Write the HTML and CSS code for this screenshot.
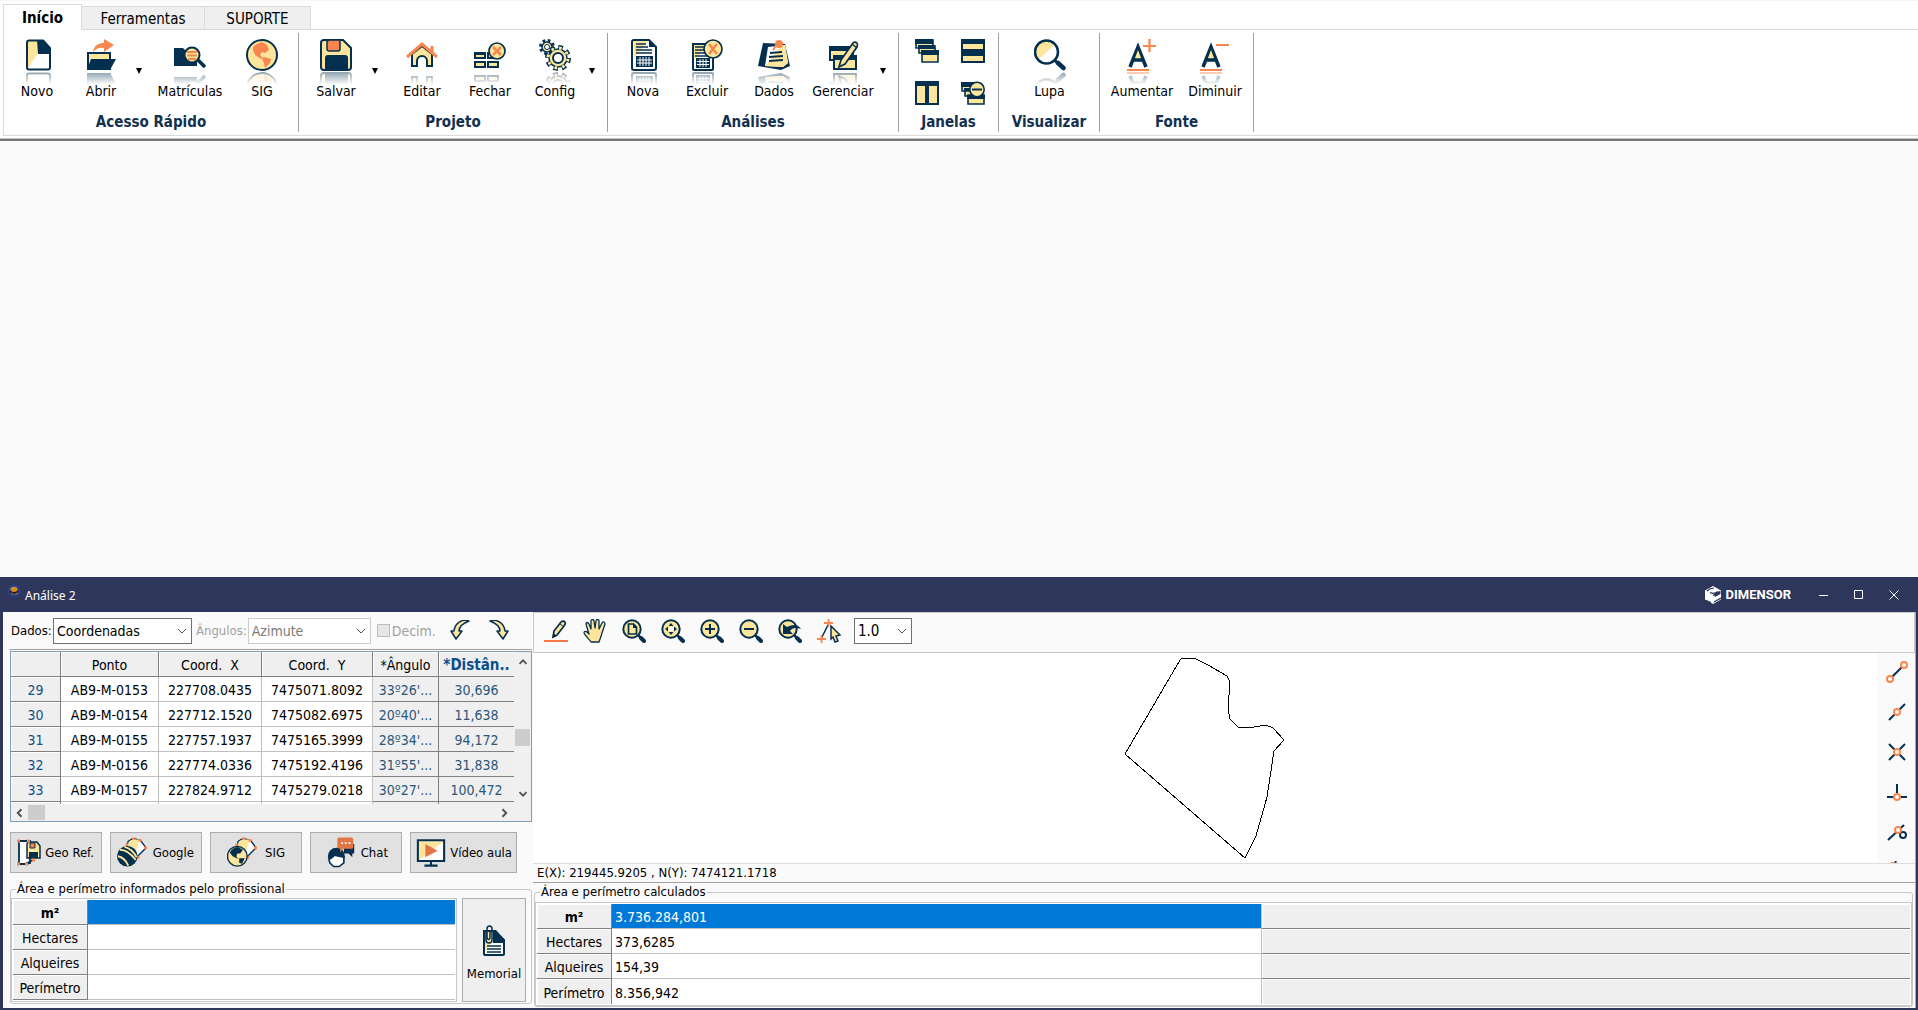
FILE: index.html
```html
<!DOCTYPE html>
<html lang="pt-BR">
<head>
<meta charset="utf-8">
<title>Análise 2</title>
<link rel="stylesheet" href="styles.css">
</head>
<body>
<svg class="defs" aria-hidden="true">
  <defs>
    <symbol id="i-novo" viewBox="0 0 32 32"><path d="M7 2h14l8 9v17a2 2 0 0 1-2 2H7a1 1 0 0 1-1-1V3a1 1 0 0 1 1-1z" fill="#fff"/><path d="M7 2h10v12L7 29z" fill="#fde59b"/><path d="M16 1h7l7 8v6H17z" fill="#04304f"/><path d="M8 1.500h14l7 8v19a2 2 0 0 1-2 2H8a2 2 0 0 1-2-2v-25a2 2 0 0 1 2-2z" fill="none" stroke="#04304f" stroke-width="2"/></symbol>
    <symbol id="i-abrir" viewBox="0 0 32 32"><path d="M3 18v-4h10l2 2h10v4z" fill="#fde59b" stroke="#04304f" stroke-width="2"/><path d="M3 14h22v16H3z" fill="#fde59b" stroke="#04304f" stroke-width="2"/><path d="M6 20h25l-6 11H2z" fill="#04304f"/><path d="M8 13C9 6 14 4 19 4V0l10 6-10 7V9c-5-1-8 1-11 4z" fill="#fa864f"/></symbol>
    <symbol id="i-matriculas" viewBox="0 0 32 32"><path d="M0 27V9h9l2 2h12v16z" fill="#04304f"/><circle cx="18" cy="16" r="7.500" fill="#fde59b" stroke="#04304f" stroke-width="2"/><path d="M13 13h10M13 16.500h10M14 20h8" stroke="#fa864f" stroke-width="2"/><path d="m24 21 7 7" stroke="#04304f" stroke-width="3.500"/></symbol>
    <symbol id="i-globo" viewBox="0 0 32 32"><circle cx="16" cy="16" r="15" fill="#fde59b" stroke="#04304f" stroke-width="2"/><path d="M7 8c3-3 6-4 9-5l5 3 2 5-4 3-3-1-2 3 3 3-2 1-6-4-2-5zM18 18l7 2-1 4-5 5-1-5-2-4z" fill="#fa864f"/></symbol>
    <symbol id="i-salvar" viewBox="0 0 32 32"><path d="M4 1h19l8 8v19a3 3 0 0 1-3 3H4a3 3 0 0 1-3-3V4a3 3 0 0 1 3-3z" fill="#fde59b" stroke="#04304f" stroke-width="2"/><path d="M9 1h11v9a2 2 0 0 1-2 2H9a2 2 0 0 1-2-2V2z" fill="#fa864f" stroke="#04304f" stroke-width="1.500"/><path d="M5 31V19a3 3 0 0 1 3-3h17a3 3 0 0 1 3 3v12z" fill="#04304f"/></symbol>
    <symbol id="i-editar" viewBox="0 0 32 32"><path d="M6 27V15l10-8 10 8v12h-5v-5a5 5 0 0 0-10 0v5z" fill="#fde59b" stroke="#04304f" stroke-width="2"/><path d="M1 18 16 5l15 13M26 7v6" fill="none" stroke="#fa864f" stroke-width="3"/></symbol>
    <symbol id="i-fechar" viewBox="0 0 32 32"><path d="M1 14h10v5H1zM14 14h10v5H14zM1 23h10v5H1zM14 23h10v5H14z" fill="#fde59b" stroke="#04304f" stroke-width="2"/><path d="M0 13h12v3H0z" fill="#04304f"/><circle cx="23" cy="12" r="8" fill="#fde59b" stroke="#04304f" stroke-width="1.700"/><path d="m19 8 8 8m0-8-8 8" stroke="#fa864f" stroke-width="2.500"/></symbol>
    <symbol id="i-config" viewBox="0 0 32 32"><circle cx="8" cy="8" r="6.500" fill="none" stroke="#04304f" stroke-width="3" stroke-dasharray="2.600 2.500"/><circle cx="8" cy="8" r="5" fill="#fde59b" stroke="#04304f" stroke-width="1.500"/><circle cx="8" cy="8" r="2.500" fill="#fff" stroke="#04304f"/><circle cx="19" cy="19" r="11" fill="none" stroke="#04304f" stroke-width="4" stroke-dasharray="4.600 4.040"/><circle cx="19" cy="19" r="9" fill="#fde59b" stroke="#04304f" stroke-width="1.500"/><circle cx="19" cy="19" r="10" fill="none" stroke="#fde59b" stroke-width="3" stroke-dasharray="2.600 5.254" stroke-dashoffset="-.8"/><circle cx="19" cy="19" r="5" fill="#fff" stroke="#04304f" stroke-width="2"/></symbol>
    <symbol id="i-nova" viewBox="0 0 32 32"><path d="M7 1h15l7 7v21a2 2 0 0 1-2 2H7a2 2 0 0 1-2-2V3a2 2 0 0 1 2-2z" fill="#fff"/><path d="M7 2h14L7 19z" fill="#fde59b"/><path d="M9 5h10M9 8h12M9 11h16M9 14h16" stroke="#04304f" stroke-width="1.300"/><path d="M9 17h17v11H9z" fill="#04304f"/><path d="M10 21h15M10 24h15M13 18v9M16 18v9M19 18v9M22 18v9" stroke="#fff"/><path d="M22 1v7h7z" fill="#04304f"/><path d="M7 1h15l7 7v21a2 2 0 0 1-2 2H7a2 2 0 0 1-2-2V3a2 2 0 0 1 2-2z" fill="none" stroke="#04304f" stroke-width="2"/></symbol>
    <symbol id="i-excluir" viewBox="0 0 32 32"><path d="M2 5h20v25a1 1 0 0 1-1 1H3a1 1 0 0 1-1-1z" fill="#fff" stroke="#04304f" stroke-width="2"/><path d="M3 6h15L3 21z" fill="#fde59b"/><path d="M4 8h12M4 11h12M4 14h12M4 17h14" stroke="#04304f" stroke-width="1.300"/><path d="M5 19h14v10H5z" fill="#04304f"/><path d="M6 22.500h12M6 25.500h12M9 20v8M12 20v8M15 20v8" stroke="#fff"/><circle cx="22" cy="10" r="9" fill="#fde59b" stroke="#04304f" stroke-width="1.700"/><path d="m18 5 8 10m0-10-8 10" stroke="#fa864f" stroke-width="2.500"/></symbol>
    <symbol id="i-dados" viewBox="0 0 32 32"><path d="m5 4 22 1 5 22-9 4-23-4z" fill="#04304f"/><path d="m10 8 17-2 3 18-5 4-18-1z" fill="#fff"/><path d="m24 6 3 0 3 18-5 4-18-1z" fill="#fde59b"/><path d="m12 14 12-1M11 18l14-1M11 22l14-1" stroke="#04304f" stroke-width="1.800"/><path d="m15 11 4-6" stroke="#fa864f" stroke-width="2"/><circle cx="21" cy="5" r="4" fill="#fa864f"/></symbol>
    <symbol id="i-gerenciar" viewBox="0 0 32 32"><path d="M3 8h23v13H3z" fill="#fde59b" stroke="#04304f" stroke-width="2"/><path d="M2 7h24v5H2z" fill="#04304f"/><path d="M7 18h22v12H7z" fill="#fde59b" stroke="#04304f" stroke-width="2"/><path d="M6 16h24v5H6z" fill="#04304f"/><path d="m12 28 2-7L26 4q2-2 4 0 1 1 0 4L18 25z" fill="#fde59b" stroke="#04304f" stroke-width="1.700"/><path d="m25 5 5 4" stroke="#04304f" stroke-width="1.500"/></symbol>
    <symbol id="i-cascata" viewBox="0 0 24 24"><path d="M1 1h17v8H1zM4 7h16v7H4zM7 12h16v11H7z" fill="#fde59b" stroke="#04304f" stroke-width="1.600"/><path d="M0 0h18v5H0zM3 6h17v4H3zM6 11h18v5H6z" fill="#04304f"/></symbol>
    <symbol id="i-horizontal" viewBox="0 0 24 24"><path d="M1 1h22v10H1zM1 13h22v10H1z" fill="#fde59b" stroke="#04304f" stroke-width="2"/><path d="M0 0h24v5H0zM0 12h24v5H0z" fill="#04304f"/></symbol>
    <symbol id="i-vertical" viewBox="0 0 24 24"><path d="M1 1h10v22H1zM13 1h10v22H13z" fill="#fde59b" stroke="#04304f" stroke-width="2"/><path d="M0 0h24v5H0z" fill="#04304f"/></symbol>
    <symbol id="i-fechartodas" viewBox="0 0 24 24"><path d="M1 2h17v8H1zM4 8h16v7H4zM7 14h16v9H7z" fill="#fde59b" stroke="#04304f" stroke-width="1.600"/><path d="M0 1h18v5H0zM3 7h17v3H3zM6 14h18v4H6z" fill="#04304f"/><circle cx="16" cy="8.500" r="7.200" fill="#fde59b" stroke="#04304f" stroke-width="1.600"/><path d="M11 8.500h10" stroke="#04304f" stroke-width="2"/></symbol>
    <symbol id="i-lupa" viewBox="0 0 32 32"><circle cx="12.500" cy="13" r="11.500" fill="#fff"/><path d="M4 21A11.500 11.500 0 1 1 21 5z" fill="#fde59b"/><circle cx="12.500" cy="13" r="11.500" fill="none" stroke="#04304f" stroke-width="2.500"/><path d="m20.500 21 3 3" stroke="#04304f" stroke-width="3"/><path d="m24 24 5.500 5" stroke="#04304f" stroke-width="4.500" stroke-linecap="round"/></symbol>
    <symbol id="i-aumentar" viewBox="0 0 32 32"><path d="M4 28 12 8l8 20M8 21h8" fill="none" stroke="#04304f" stroke-width="3.500"/><path d="m12 11 3 8H9z" fill="#fde59b"/><path d="M1 31h22M17 7h13M23.500 0v13" stroke="#fa864f" stroke-width="2.200"/></symbol>
    <symbol id="i-diminuir" viewBox="0 0 32 32"><path d="M4 28 12 8l8 20M8 21h8" fill="none" stroke="#04304f" stroke-width="3.500"/><path d="m12 11 3 8H9z" fill="#fde59b"/><path d="M1 31h22M17 6h13" stroke="#fa864f" stroke-width="2.200"/></symbol>
    <symbol id="i-desfazer" viewBox="0 0 20 20"><path d="M19 1C13-1 5 2 4 11H1l5 8 6-8H9c0-4 2-7 10-10z" fill="#fde59b" stroke="#04304f" stroke-width="1.500" stroke-linejoin="round"/></symbol>
    <symbol id="i-lapis" viewBox="0 0 24 24"><path d="m9 18 1-6 7-9q2-2 4 0 1 1-1 4l-7 9z" fill="#fde59b" stroke="#04304f" stroke-width="1.700"/><path d="m16 5 4 3M9 18l1-3 2 2z" stroke="#04304f"/><path d="M0 22h24" stroke="#fa7a45" stroke-width="2"/></symbol>
    <symbol id="i-mao" viewBox="0 0 24 24"><path d="M8 23c-2-3-5-5-7-9 0-2 2-2 3-1l2 2L3 5c0-2 2-2 3 0l2 5L8 2c0-2 3-2 3 0l1 7 1-7c0-2 3-2 3 0v8l3-6c1-2 3-1 3 1l-3 9c-1 4-2 6-3 9z" fill="#fde59b" stroke="#04304f" stroke-width="1.300" stroke-linejoin="round"/></symbol>
    <symbol id="i-lente" viewBox="0 0 24 24"><circle cx="10" cy="10" r="8.700" fill="#fde59b" stroke="#04304f" stroke-width="2"/><path d="m16 16 3 3" stroke="#04304f" stroke-width="2.500"/><path d="m19 19 3 3" stroke="#04304f" stroke-width="4" stroke-linecap="round"/></symbol>
    <symbol id="i-vertice" viewBox="0 0 24 24"><path d="m4 20 8-16" stroke="#04304f" stroke-width="1.500"/><path d="M0 20h9M4.500 16v8M7 4h9M11.500 0v8" stroke="#fa864f" stroke-width="1.800"/><path d="m14 7 9 9-4 1 2 5-3 1-2-5-2 2z" fill="#fde59b" stroke="#04304f" stroke-width="1.500"/></symbol>
    <symbol id="i-terreno" viewBox="0 0 32 32"><path d="m12 4 5-3 8 2 6 8-10 10-12-6z" fill="#fff" stroke="#04304f" stroke-width="1.500"/><path d="M13 4 17 2h7l-5 17-9-5z" fill="#fde59b"/><path d="M16 1h3M23 3h3M29 11h3M9 8h3M21 21h3" stroke="#fa864f" stroke-width="3"/></symbol>
  </defs>
</svg>

<header class="ribbon">
  <nav class="tabs">
    <button class="tab tab-active">Início</button>
    <button class="tab">Ferramentas</button>
    <button class="tab tab-support">SUPORTE</button>
  </nav>
  <div class="groups">
    <section class="group g-acesso">
      <div class="tools">
        <button class="tool"><svg><use href="#i-novo"/></svg>Novo</button>
        <button class="tool"><svg><use href="#i-abrir"/></svg>Abrir</button>
        <button class="more" aria-label="Mais opções de abrir"></button>
        <button class="tool"><svg><use href="#i-matriculas"/></svg>Matrículas</button>
        <button class="tool"><svg><use href="#i-globo"/></svg>SIG</button>
      </div>
      <h2>Acesso Rápido</h2>
    </section>
    <section class="group g-projeto">
      <div class="tools">
        <button class="tool"><svg><use href="#i-salvar"/></svg>Salvar</button>
        <button class="more" aria-label="Mais opções de salvar"></button>
        <button class="tool"><svg><use href="#i-editar"/></svg>Editar</button>
        <button class="tool"><svg><use href="#i-fechar"/></svg>Fechar</button>
        <button class="tool"><svg><use href="#i-config"/></svg>Config</button>
        <button class="more" aria-label="Mais configurações"></button>
      </div>
      <h2>Projeto</h2>
    </section>
    <section class="group g-analises">
      <div class="tools">
        <button class="tool"><svg><use href="#i-nova"/></svg>Nova</button>
        <button class="tool"><svg><use href="#i-excluir"/></svg>Excluir</button>
        <button class="tool"><svg><use href="#i-dados"/></svg>Dados</button>
        <button class="tool"><svg><use href="#i-gerenciar"/></svg>Gerenciar</button>
        <button class="more" aria-label="Mais opções de gerenciar"></button>
      </div>
      <h2>Análises</h2>
    </section>
    <section class="group g-janelas">
      <div class="tools">
        <button class="mini" aria-label="Cascata"><svg><use href="#i-cascata"/></svg></button>
        <button class="mini" aria-label="Horizontal"><svg><use href="#i-horizontal"/></svg></button>
        <button class="mini" aria-label="Vertical"><svg><use href="#i-vertical"/></svg></button>
        <button class="mini" aria-label="Fechar todas"><svg><use href="#i-fechartodas"/></svg></button>
      </div>
      <h2>Janelas</h2>
    </section>
    <section class="group g-visualizar">
      <div class="tools"><button class="tool"><svg><use href="#i-lupa"/></svg>Lupa</button></div>
      <h2>Visualizar</h2>
    </section>
    <section class="group g-fonte">
      <div class="tools">
        <button class="tool"><svg><use href="#i-aumentar"/></svg>Aumentar</button>
        <button class="tool"><svg><use href="#i-diminuir"/></svg>Diminuir</button>
      </div>
      <h2>Fonte</h2>
    </section>
  </div>
</header>

<main class="workspace">
  <section class="window">
    <header class="titlebar">
      <svg class="app-icon" viewBox="0 0 16 16"><path d="m8 0 7 4v8l-7 4-7-4V4z" fill="#263f8c"/><path d="m3 9 2 3 6 0 2-3-2-3-6 0z" fill="#111b35"/><ellipse cx="8" cy="6" rx="4" ry="3" fill="#d98a1c"/><path d="M4 9q4 4 9 0l-1 3H5z" fill="#a87022"/></svg>
      <h1>Análise 2</h1>
      <svg class="brand-icon" viewBox="0 0 16 18"><path d="m8 0 8 4.500v9L8 18l-8-4.500v-9z" fill="#fff"/><path d="M2 5q3-3 7-3M5 6.500q4 2 8-1M8 9.500l7-4M1 14.500l5 2M9 16l7-4" fill="none" stroke="#2e375b" stroke-width="1.200"/><path d="M9 8.500 15.500 5v3L10 11z" fill="#2e375b"/></svg>
      <span class="brand">DIMENSOR</span>
      <button class="caption" aria-label="Minimizar"><svg viewBox="0 0 10 10"><path d="M0 5.500h9"/></svg></button>
      <button class="caption" aria-label="Maximizar"><svg viewBox="0 0 10 10"><path d="M.5.500h8v8h-8z"/></svg></button>
      <button class="caption" aria-label="Fechar"><svg viewBox="0 0 10 10"><path d="m.5.500 9 9m0-9-9 9"/></svg></button>
    </header>

    <div class="panes">
      <div class="left">
        <div class="filters">
          <label for="dados">Dados:</label>
          <select id="dados" class="combo combo-dados"><option>Coordenadas</option></select>
          <label for="angulos" class="off">Ângulos:</label>
          <select id="angulos" class="combo combo-angulos" disabled><option>Azimute</option></select>
          <label class="check off"><input type="checkbox" disabled>Decim.</label>
          <button class="undo" aria-label="Desfazer"><svg><use href="#i-desfazer"/></svg></button>
          <button class="redo" aria-label="Refazer"><svg><use href="#i-desfazer"/></svg></button>
        </div>

        <div class="grid">
          <div class="grid-view">
            <table class="points">
              <colgroup><col class="c-num"><col class="c-ponto"><col class="c-x"><col class="c-y"><col class="c-ang"><col></colgroup>
              <thead><tr><th></th><th>Ponto</th><th>Coord. &nbsp;X</th><th>Coord. &nbsp;Y</th><th>*Ângulo</th><th class="dist">*Distân..</th></tr></thead>
              <tbody>
                <tr><th>29</th><td>AB9-M-0153</td><td>227708.0435</td><td>7475071.8092</td><td class="calc">33º26'...</td><td class="calc">30,696</td></tr>
                <tr><th>30</th><td>AB9-M-0154</td><td>227712.1520</td><td>7475082.6975</td><td class="calc">20º40'...</td><td class="calc">11,638</td></tr>
                <tr><th>31</th><td>AB9-M-0155</td><td>227757.1937</td><td>7475165.3999</td><td class="calc">28º34'...</td><td class="calc">94,172</td></tr>
                <tr><th>32</th><td>AB9-M-0156</td><td>227774.0336</td><td>7475192.4196</td><td class="calc">31º55'...</td><td class="calc">31,838</td></tr>
                <tr><th>33</th><td>AB9-M-0157</td><td>227824.9712</td><td>7475279.0218</td><td class="calc">30º27'...</td><td class="calc">100,472</td></tr>
                <tr><th></th><td></td><td></td><td></td><td class="calc"></td><td class="calc"></td></tr>
              </tbody>
            </table>
          </div>
          <div class="vbar"><svg viewBox="0 0 8 6"><path d="m1 5 3-3 3 3"/></svg><i></i><svg viewBox="0 0 8 6"><path d="m1 1 3 3 3-3"/></svg></div>
          <div class="hbar"><svg viewBox="0 0 6 8"><path d="M5 1 2 4l3 3"/></svg><i></i><svg viewBox="0 0 6 8"><path d="m1 1 3 3-3 3"/></svg></div>
        </div>

        <div class="actions">
          <button class="action"><svg viewBox="0 0 24 27"><path d="M2 2h11v22l-5 1H2z" fill="#fff" stroke="#04304f" stroke-width="1.800"/><path d="m2 25 6 0 10-5" fill="none" stroke="#04304f" stroke-width="1.500"/><path d="M11 3h9l3 4v12H10V5z" fill="#fde59b" stroke="#04304f" stroke-width="1.500"/><path d="M12 19v-6h9v6z" fill="#04304f"/><path d="M13 4h5v5h-5z" fill="#fa864f" stroke="#04304f"/><path d="M0 2h3M10 2h3M0 25h3M8 25h3M15 21h3" stroke="#fa864f" stroke-width="3"/></svg>Geo Ref.</button>
          <button class="action"><svg class="wide" viewBox="0 0 32 32"><use href="#i-terreno" width="32" height="32"/><circle cx="11" cy="20" r="11" fill="#04304f"/><path d="M3 13q9 0 17 11M8 10q8 2 13 11M1 20q7 1 11 10" fill="none" stroke="#fde59b" stroke-width="2"/></svg>Google</button>
          <button class="action"><svg class="wide" viewBox="0 0 32 32"><use href="#i-terreno" width="32" height="32"/><circle cx="11" cy="20" r="10.500" fill="#fde59b" stroke="#04304f" stroke-width="1.500"/><path d="M3 16q3-6 9-6l5 3-3 4-3 0-1 3 2 3-6-3zM13 22l6 0-3 6-3-1z" fill="#04304f"/></svg>SIG</button>
          <button class="action"><svg class="wide" viewBox="0 0 32 32"><path d="M18 7h11v10h-2v4l-4-4h-5z" fill="#04304f"/><circle cx="10" cy="20" r="9" fill="#04304f"/><path d="M2 23c3 0 4-3 6-4l10 2v6l-5 4H7l-4-4z" fill="#fff" stroke="#04304f" stroke-width="1.700"/><path d="M13 0h13a2 2 0 0 1 2 2v8a2 2 0 0 1-2 2H17l-3 4v-4l-3-1V2a2 2 0 0 1 2-2z" fill="#e57444"/><path d="M15 6h10" stroke="#fff" stroke-width="2" stroke-dasharray="2 2"/></svg>Chat</button>
          <button class="action action-video"><svg class="wide" viewBox="0 0 32 32"><path d="M2 4h28v21H2z" fill="#fff"/><path d="M2 4h28L2 25z" fill="#fde59b"/><path d="M2 3h28v22H2zM9 30h14M16 25v5" fill="none" stroke="#04304f" stroke-width="2.200"/><path d="m10 7 13 7-13 7z" fill="#e57444"/></svg>Vídeo aula</button>
        </div>

        <fieldset class="box box-informed">
          <legend>Área e perímetro informados pelo profissional</legend>
          <div class="informed">
            <table class="areas">
              <colgroup><col class="c-name"><col></colgroup>
              <tr class="sel"><th>m²</th><td></td></tr>
              <tr><th>Hectares</th><td></td></tr>
              <tr><th>Alqueires</th><td></td></tr>
              <tr><th>Perímetro</th><td></td></tr>
            </table>
            <button class="memorial"><svg viewBox="0 0 24 32"><path d="M2 6h10l10 9v14a1 1 0 0 1-1 1H3a1 1 0 0 1-1-1z" fill="#fff" stroke="#04304f" stroke-width="2"/><path d="M3 7h7v10l-7 10z" fill="#fde59b"/><path d="M11 5h3l9 10v3H11z" fill="#04304f"/><path d="M5 21h14M5 24h14M5 27h14" stroke="#04304f" stroke-width="1.600"/><path d="M4 6v9q0 3 3 3t3-3V4q0-3-2.500-3T5 4v9q2 3 3 0V7" fill="none" stroke="#04304f" stroke-width="1.500"/></svg>Memorial</button>
          </div>
        </fieldset>
      </div>

      <div class="right">
        <div class="viewbar">
          <button aria-label="Desenhar"><svg><use href="#i-lapis"/></svg></button>
          <button aria-label="Mover"><svg><use href="#i-mao"/></svg></button>
          <button aria-label="Zoom na página"><svg viewBox="0 0 24 24"><use href="#i-lente"/><path d="M6.500 5h5l3 3v7h-8z" fill="#fde59b" stroke="#04304f" stroke-width="1.700"/><path d="M11 4v5h4z" fill="#04304f"/></svg></button>
          <button aria-label="Zoom total"><svg viewBox="0 0 24 24"><use href="#i-lente"/><path d="m10 4 2.500 3h-5zM10 16l2.500-3h-5zM4 10l3-2.500v5zM16 10l-3-2.500v5z" fill="#04304f"/><circle cx="10" cy="10" r="2.500" fill="#fff"/></svg></button>
          <button aria-label="Aproximar"><svg viewBox="0 0 24 24"><use href="#i-lente"/><path d="M5 10h10M10 5v10" stroke="#04304f" stroke-width="2"/></svg></button>
          <button aria-label="Afastar"><svg viewBox="0 0 24 24"><use href="#i-lente"/><path d="M5 10h10" stroke="#04304f" stroke-width="2"/></svg></button>
          <button aria-label="Zoom anterior"><svg viewBox="0 0 24 24"><use href="#i-lente"/><path d="M5 5v10h10l-3-3q3-5 11-2-4-7-14-2z" fill="#04304f"/></svg></button>
          <button aria-label="Selecionar vértice"><svg><use href="#i-vertice"/></svg></button>
          <select class="combo combo-scale" aria-label="Escala"><option>1.0</option></select>
        </div>
        <div class="canvas">
          <svg class="plot" viewBox="0 0 1344 210"><path d="M592 101 647 7l2-2h12l14 7 19 11 3 6-2 26 2 11 8 8 10 1 18-3 7 3 11 12-10 11-7 46-11 39-11 22z"/></svg>
          <div class="snaps">
            <button aria-label="Extremidade"><svg viewBox="0 0 22 22"><path d="M4 18 18 4"/><circle cx="4" cy="18" r="3"/><circle cx="18" cy="4" r="3"/></svg></button>
            <button aria-label="Ponto médio"><svg viewBox="0 0 22 22"><path d="M3 19 19 3"/><circle cx="11" cy="11" r="3"/></svg></button>
            <button aria-label="Interseção"><svg viewBox="0 0 22 22"><path d="M3 19 19 3M3 3l16 16"/><circle cx="11" cy="11" r="3"/></svg></button>
            <button aria-label="Perpendicular"><svg viewBox="0 0 22 22"><path d="M1 16h20M11 16V3"/><circle cx="11" cy="16" r="3"/></svg></button>
            <button aria-label="Tangente"><svg viewBox="0 0 22 22"><path d="M2 19 18 4"/><circle cx="17" cy="14" r="3" class="dark"/><circle cx="12" cy="9" r="3"/></svg></button>
            <button aria-label="Próximo"><svg viewBox="0 0 22 22"><path d="M4 14 10 0"/><circle cx="7" cy="6" r="4"/></svg></button>
          </div>
        </div>
        <output class="status">E(X): 219445.9205 , N(Y): 7474121.1718</output>
        <fieldset class="box box-calculated">
          <legend>Área e perímetro calculados</legend>
          <table class="areas areas-calc">
            <colgroup><col class="c-name"><col class="c-half"><col></colgroup>
            <tr class="sel"><th>m²</th><td>3.736.284,801</td><th></th></tr>
            <tr><th>Hectares</th><td>373,6285</td><th></th></tr>
            <tr><th>Alqueires</th><td>154,39</td><th></th></tr>
            <tr><th>Perímetro</th><td>8.356,942</td><th></th></tr>
          </table>
        </fieldset>
      </div>
    </div>
  </section>
</main>
</body>
</html>
```
FILE: styles.css
```css
* { box-sizing: border-box; }

body {
  margin: 0;
  min-height: 100vh;
  display: flex;
  flex-direction: column;
  background: #fafafa;
  color: #000;
  font: 14px/18px "DejaVu Sans Condensed", "Noto Sans", sans-serif;
}

button, select, input { font: inherit; color: inherit; }
button { border: 0; padding: 0; background: none; }
h1, h2 { margin: 0; }
.defs { display: none; }

/* Ribbon */
.ribbon {
  background: #fff;
  padding: 3px 0 3px 3px;
  border-top: 1px solid #f6f6f6;
  border-bottom: 2px solid #767676;
  box-shadow: inset 0 -1px #c4c4c4;
}

.tabs {
  display: flex;
  align-items: flex-end;
  height: 26px;
  box-shadow: inset 0 -1px #dadada;
  font-size: 15px;
}
.tab {
  width: 123px;
  height: 24px;
  padding: 2px 0 0;
  background: #efefef;
  border: 1px solid #dadada;
  border-left: 0;
}
.tab-support { width: 106px; }
.tab-active {
  width: 79px;
  height: 26px;
  padding: 0;
  background: #fff;
  border-left: 1px solid #dadada;
  border-bottom: 0;
  font-weight: bold;
}

.groups {
  display: flex;
  height: 106px;
  padding-top: 3px;
  border: solid #dadada;
  border-width: 0 0 1px 1px;
}
.group {
  display: flex;
  flex-direction: column;
  height: 99px;
  border-right: 1px solid #a0a0a0;
}
.group h2 {
  margin-top: auto;
  padding-bottom: 1px;
  text-align: center;
  font-size: 15px;
  line-height: 18px;
  color: #12304f;
}
.tools { display: grid; padding-top: 6px; }
.g-acesso { width: 295px; }
.g-acesso .tools { grid-template-columns: 64px 64px 12px 90px 54px; padding-left: 1px; }
.g-projeto { width: 309px; }
.g-projeto .tools { grid-template-columns: 56px 22px 72px 64px 66px 8px; padding-left: 9px; }
.g-analises { width: 291px; }
.g-analises .tools { grid-template-columns: 64px 64px 70px 68px 12px; padding-left: 3px; }
.g-janelas { width: 100px; }
.g-janelas .tools { grid-template-columns: 24px 24px; gap: 18px 22px; padding-left: 16px; }
.g-visualizar { width: 101px; }
.g-visualizar .tools { padding-left: 1px; }
.g-fonte { width: 154px; }
.g-fonte .tools { grid-template-columns: 72px 74px; padding-left: 6px; }

.tool { display: flex; flex-direction: column; align-items: center; gap: 11px; }
.tool svg {
  width: 32px;
  height: 32px;
  -webkit-box-reflect: below 1px linear-gradient(transparent 60%, rgba(0, 0, 0, .45));
}
.mini svg { display: block; width: 24px; height: 24px; }
.more {
  align-self: start;
  justify-self: center;
  margin-top: 29px;
  border: solid transparent;
  border-width: 6px 3px 0;
  border-top-color: #000;
}

/* Analysis window docked at the bottom of the workspace */
.workspace { flex: 1; display: flex; flex-direction: column; justify-content: flex-end; }
.window { padding: 0 2px 2px 3px; background: #2e375b; }
.titlebar { display: flex; align-items: center; height: 35px; padding: 1px 5px 0 4px; color: #fff; }
.app-icon { width: 14px; height: 16px; margin-bottom: 8px; }
.titlebar h1 { flex: 1; padding: 2px 0 0 4px; font: 12px/16px "Noto Sans", sans-serif; }
.brand-icon { width: 16px; height: 18px; margin-right: 5px; }
.brand { margin-right: 15px; font: bold 13px/16px Roboto, sans-serif; }
.caption { width: 35px; height: 34px; }
.caption svg { width: 10px; height: 10px; fill: none; stroke: #fff; }

.panes { display: flex; background: #fafafa; }
.left { flex: 0 0 530px; padding: 0 1px 3px 6px; }
.right { flex: 1; min-width: 0; display: flex; flex-direction: column; border-right: 1px solid #aaa; }

.filters {
  display: flex;
  align-items: center;
  height: 38px;
  padding-left: 2px;
  border-bottom: 1px solid #a0a0a0;
  font-size: 13px;
}
.filters > label:first-child { width: 42px; }
.off { color: #a0a0a0; }
.combo {
  appearance: none;
  height: 26px;
  padding: 0 20px 0 3px;
  border: 1px solid #707070;
  border-radius: 0;
  background: #fff url("data:image/svg+xml,%3Csvg xmlns='http://www.w3.org/2000/svg' width='10' height='6'%3E%3Cpath d='m1 1 4 4 4-4' fill='none' stroke='%23555'/%3E%3C/svg%3E") no-repeat right 4px center;
  font-size: 14px;
}
.combo:disabled { opacity: 1; color: #7a7a7a; border-color: #ccc; }
.combo-dados { width: 139px; margin-right: 4px; }
.combo-angulos { width: 123px; margin-left: 1px; }
.check { display: flex; align-items: center; gap: 2px; margin-left: 6px; font-size: 14px; }
.check input {
  appearance: none;
  width: 13px;
  height: 13px;
  margin: 0;
  border: 1px solid #bcbcbc;
  background: #e6e6e6;
}
.undo, .redo { height: 20px; margin: 0 9px 2px 10px; }
.undo { margin-left: auto; }
.undo svg, .redo svg { display: block; width: 20px; height: 20px; }
.redo { margin-right: 23px; transform: scaleX(-1); }

.grid {
  display: grid;
  grid-template: 152px 17px / 1fr 17px;
  margin: 1px 0 0 1px;
  border: 1px solid #7f9db9;
  background: #f0f0f0;
}
.grid-view { overflow: hidden; }
table { border-collapse: separate; border-spacing: 0; table-layout: fixed; width: 100%; }
th, td { height: 25px; padding: 2px 0 0; white-space: nowrap; line-height: 18px; font-weight: normal; }
th {
  background: #efefef;
  border: solid #808080;
  border-width: 0 1px 1px 0;
  box-shadow: inset 1px 1px #fff;
}
td { background: #fff; border: solid #c0c0c0; border-width: 0 1px 1px 0; }
.points td { text-align: center; }
.points tbody th { color: #10508c; }
.points .calc { background: #efefef; color: #2b5878; border-color: #808080; }
.points .dist { overflow: hidden; color: #0b4f8c; font-size: 15px; font-weight: bold; }
.points tr > :last-child { border-right: 0; }
.c-num { width: 50px; }
.c-ponto { width: 98px; }
.c-x { width: 103px; }
.c-y { width: 111px; }
.c-ang { width: 66px; }

.vbar, .hbar { display: flex; align-items: center; justify-content: space-between; }
.vbar { flex-direction: column; padding: 6px 0; }
.vbar svg { width: 10px; height: 7px; }
.vbar i { width: 15px; height: 17px; margin-top: 19px; background: #cdcdcd; }
.hbar { padding: 0 5px 0 4px; }
.hbar svg { width: 8px; height: 10px; }
.hbar i { width: 17px; height: 15px; margin: 0 auto 0 5px; background: #cdcdcd; }
.vbar path, .hbar path { fill: none; stroke: #505050; stroke-width: 1.500; }

.actions { display: flex; gap: 8px; margin: 10px 0 8px 1px; font-size: 13px; }
.action {
  display: flex;
  align-items: center;
  justify-content: space-between;
  width: 92px;
  height: 41px;
  padding: 0 7px 0 6px;
  border: 1px solid #adadad;
  background: #e1e1e1;
}
.action-video { width: 107px; padding: 0 4px 0 5px; }
.action svg { width: 24px; height: 27px; }
.action .wide { width: 30px; height: 31px; }
.action:nth-child(3), .action:nth-child(4) { padding: 0 16px; }
.action:nth-child(4) { padding-right: 13px; }

.box {
  min-width: 0;
  margin: 0;
  padding: 1px 0 1px;
  border: 1px solid #c8c8c8;
  border-radius: 3px;
}
.box legend { padding: 0 1px; margin-left: 5px; font-size: 13px; line-height: 16px; }
.box-informed { margin-left: 1px; }
.informed { display: flex; gap: 5px; padding-right: 5px; }
.areas { border: 1px solid #c8c8c8; padding: 1px; background: #fff; }
.areas .c-name { width: 75px; }
.areas td { padding-left: 3px; border-right: 0; }
.areas tr:first-child th:first-child { font-weight: bold; }
.areas .sel td { background: #0078d7; color: #fff; }
.areas-calc td { border-right: 1px solid #c0c0c0; }
.areas-calc th:last-child { border-right: 0; }
.areas-calc tr:last-child > * { border-bottom: 0; }
.memorial {
  flex: 0 0 64px;
  display: flex;
  flex-direction: column;
  align-items: center;
  justify-content: center;
  gap: 8px;
  padding-top: 8px;
  border: 1px solid #adadad;
  background: #efefef;
  font-size: 13px;
}
.memorial svg { width: 24px; height: 32px; }

.viewbar {
  display: flex;
  align-items: center;
  gap: 15px;
  height: 41px;
  padding: 0 0 3px 10px;
  border: 1px solid #c8c8c8;
}
.viewbar svg { display: block; width: 24px; height: 24px; }
.viewbar .combo-scale { width: 58px; margin-left: -2px; font-size: 15px; }

.canvas { flex: 1 1 210px; min-height: 210px; display: flex; background: #fff; }
.plot { flex: 1; min-width: 0; height: 210px; fill: none; stroke: #000; shape-rendering: crispEdges; }
.snaps {
  flex: 0 0 38px;
  display: flex;
  flex-direction: column;
  align-items: center;
  gap: 18px;
  height: 210px;
  padding: 8px 0 0 1px;
  overflow: hidden;
  background: #fafafa;
}
.snaps button { flex: none; height: 22px; }
.snaps svg { display: block; width: 22px; height: 22px; fill: #fff; stroke: #fa864f; stroke-width: 2; }
.snaps path, .snaps .dark { stroke: #04304f; }
.status {
  height: 20px;
  padding-left: 4px;
  border: solid #a0a0a0;
  border-width: 1px 0;
  border-top-color: #ddd;
  font-size: 13px;
}
.box-calculated { margin: 1px 2px 1px 1px; padding: 2px 0 0; }
.box-calculated .c-half { width: 650px; }
```
